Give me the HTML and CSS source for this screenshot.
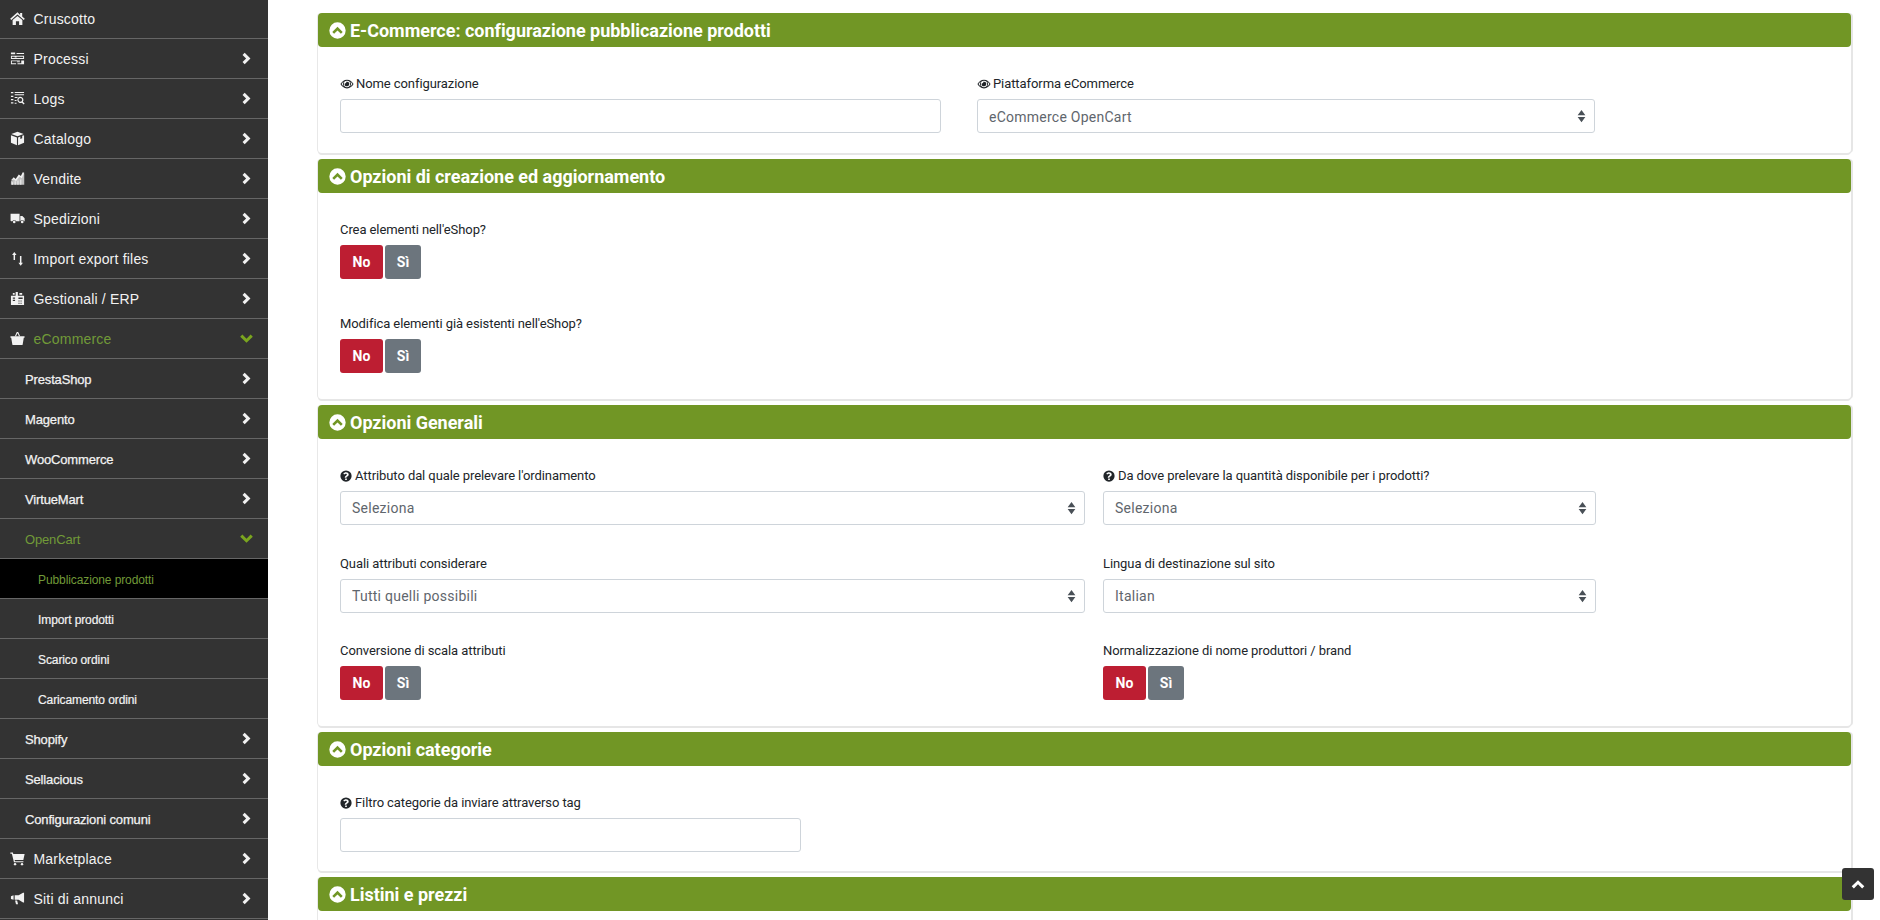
FILE: index.html
```html
<!DOCTYPE html>
<html lang="it">
<head>
    <meta charset="UTF-8">
    <title>E-Commerce: configurazione pubblicazione prodotti</title>
    <link rel="stylesheet" href="styles.css">
</head>
<body>
    <svg class="sprites" xmlns="http://www.w3.org/2000/svg">
        <symbol id="i-home" viewBox="0 0 16 16"><path d="M8 1.400.2 8.200l1.100 1.300L8 3.700l6.700 5.800 1.100-1.300-2.800-2.400V2h-2.200v2.300zM2.800 9.700 8 5.200l5.200 4.500v5.100H9.700v-4H6.300v4H2.800z"/></symbol>
        <symbol id="i-process" viewBox="0 0 16 16"><path d="M1 1.500h4.500v2H1zM7 2.200h8v.9H7zM1 5h14v3.500H1zm1 1v1.500h3V7h2v.5h7V6H7v.5H5V6zM1 10h9.500v.9H2v2.200h4.500v.9H1zm6.500 1.200h3v.9h-3zM8 13h7v1H8zm4-3h3v3h-3z"/></symbol>
        <symbol id="i-logs" viewBox="0 0 16 16"><path d="M5 1h10v1.200H5zM5 3.400h10v1H5zM1 1h2.600v1.400H1zM1 5h2.600v1.400H1zM1 8.400h2.600v1.400H1zM1 12h2.600v1.400H1zM5 6.400h3v1H5zM5 9.600h2v1H5zM5 12.600h2v1H5z"/><path d="M11 6a3.400 3.400 0 0 1 2.700 5.400l1.900 2-1 1-2-1.900A3.400 3.400 0 1 1 11 6zm0 1.400a2 2 0 1 0 0 4 2 2 0 0 0 0-4z"/></symbol>
        <symbol id="i-box" viewBox="0 0 16 16"><path d="M8 .8 14.600 3.200 8 5.700 1.400 3.200zM1 4.400l6.400 2.400v8.400L1 12.600zM15 4.400v8.200l-6.400 2.600V6.800l2.400-.9v2.600l2-.8V5.100z"/></symbol>
        <symbol id="i-chart" viewBox="0 0 16 16"><path d="M1 14.600v-3.400l3-3 2 1.800 3.600-4.600L12 7l2.200-4.400 1 .1v11.900z" opacity=".75"/><path d="M.8 10 4 6.600l2 1.800 3.400-4.600 2.200 1.600 2-4.200 1.600.6-2.600 6-2.600-1.800-3.600 4.800L4 9zM2 12h1v2.600H2zM5 11h1v3.600H5zM8 10h1v4.600H8zM11 9h1v5.600h-1z"/></symbol>
        <symbol id="i-truck" viewBox="0 0 16 16"><path d="M.6 3h9.600v8H6.400a2 2 0 0 0-3.800 0H1.400a.8.800 0 0 1-.8-.8zM11 5.200h2.200l2.400 2.600V11h-.7a2 2 0 0 0-3.800 0H11z"/><circle cx="4.500" cy="11.600" r="1.400"/><circle cx="13" cy="11.600" r="1.400"/></symbol>
        <symbol id="i-arrows" viewBox="0 0 16 16"><path d="M4.600 1 7 4.200H5.400v5.400H3.800V4.200H2.200zM10.600 5.400h1.600v7.200h1.600l-2.400 3.200-2.400-3.200h1.600z"/></symbol>
        <symbol id="i-erp" viewBox="0 0 16 16"><path d="M1 5h5V1h2.400v4H15v10H1zm2-3h2v2H3zm7 0h3v2h-3z"/><path fill="#333" d="M9 7h4.500v1.600H9zM9 10h1.200v1.200H9zm2.200 0h1.200v1.200h-1.200zM9 12.400h1.200v1.200H9zm2.200 0h1.200v1.200h-1.200zM3 7h2.400v1.200H3zm0 2.400h2.400v1.200H3z"/></symbol>
        <symbol id="i-basket" viewBox="0 0 16 16"><path d="M5.200 5.600 7 1.600c.2-.6 1.800-.6 2 0l1.800 4H9.500L8.300 2.600h-.6L6.500 5.600z"/><path d="M.5 5.600h15v1.600h-.8l-1.200 7.200c0 .3-.4.6-.7.6H3.200c-.3 0-.7-.3-.7-.6L1.300 7.200H.5z"/></symbol>
        <symbol id="i-cart" viewBox="0 0 16 16"><path d="M.4 1.600h2.700l.4 1.600h12.100l-1.400 6.400H5l.3 1.200h9v1.200H4.200L2 2.800H.4z"/><circle cx="5.400" cy="14" r="1.300"/><circle cx="12.800" cy="14" r="1.300"/></symbol>
        <symbol id="i-bullhorn" viewBox="0 0 16 16"><path d="M15 1.800v10.400h-1.100L9.200 9.400H5V4.600h4.200l4.700-2.800zM1 5.600l2.800-1v4.800L1 8.400zM5.400 10.200h2.200l1 3.800H6.400z"/></symbol>
        <symbol id="i-eye" viewBox="0 0 16 16"><path fill-rule="evenodd" d="M8 3c3.400 0 6 2.400 7.500 5C14 10.600 11.400 13 8 13S2 10.600.5 8C2 5.400 4.600 3 8 3zM8 4.400A3.600 3.600 0 1 0 8 11.600 3.600 3.600 0 0 0 8 4.400zM4.200 5.200C3.200 6 2.400 7 1.800 8c.6 1 1.400 2 2.400 2.800A5 5 0 0 1 4.200 5.200zM11.800 5.200a5 5 0 0 1 0 5.600c1-.8 1.800-1.800 2.400-2.800-.6-1-1.400-2-2.400-2.800zM8 5.400a2.600 2.600 0 1 1-2.400 1.600A1.200 1.200 0 0 0 7.200 5.500 2.600 2.600 0 0 1 8 5.400z"/></symbol>
        <symbol id="i-question" viewBox="0 0 16 16"><path fill-rule="evenodd" d="M8 .5a7.500 7.500 0 1 1 0 15 7.500 7.500 0 0 1 0-15zM6.900 11.200v2.100h2.200v-2.100zM8.100 2.900c-1.700 0-3 .8-3.800 2l1.500 1.200c.5-.6 1-1.100 2-1.100.8 0 1.400.4 1.400 1 0 .7-.5 1-1.200 1.500-.9.500-1.600 1.100-1.600 2.300v.6h2.200c0-1 .4-1.200 1.100-1.600 1-.6 1.900-1.300 1.900-2.800 0-2-1.800-3.100-3.500-3.100z"/></symbol>
        <symbol id="i-circle-up" viewBox="0 0 16 16"><path fill-rule="evenodd" d="M8 .3a7.700 7.700 0 1 1 0 15.400A7.700 7.700 0 0 1 8 .3zm0 4.200L3.100 9.400l1.700 1.700L8 7.900l3.200 3.200 1.700-1.700z"/></symbol>
        <symbol id="i-right" viewBox="0 0 10 14"><path d="M3 .6 9.400 7 3 13.400.6 11l4-4-4-4z"/></symbol>
        <symbol id="i-down" viewBox="0 0 14 10"><path d="M2.400.6 7 5.200 11.600.6 14 3 7 9.800 0 3z"/></symbol>
        <symbol id="i-up" viewBox="0 0 14 10"><path d="M7 .2 14 7l-2.400 2.400L7 4.800 2.400 9.400 0 7z"/></symbol>
        <symbol id="i-updown" viewBox="0 0 10 16"><path d="M5 1 9.400 7H.6zM.6 9h8.800L5 15z"/></symbol>
    </svg>

    <div class="layout">
        <nav class="sidebar">
            <a class="nav-item"><svg class="nav-icon"><use href="#i-home"/></svg><span class="nav-text">Cruscotto</span></a>
            <a class="nav-item"><svg class="nav-icon"><use href="#i-process"/></svg><span class="nav-text">Processi</span><svg class="nav-arrow"><use href="#i-right"/></svg></a>
            <a class="nav-item"><svg class="nav-icon"><use href="#i-logs"/></svg><span class="nav-text">Logs</span><svg class="nav-arrow"><use href="#i-right"/></svg></a>
            <a class="nav-item"><svg class="nav-icon"><use href="#i-box"/></svg><span class="nav-text">Catalogo</span><svg class="nav-arrow"><use href="#i-right"/></svg></a>
            <a class="nav-item"><svg class="nav-icon"><use href="#i-chart"/></svg><span class="nav-text">Vendite</span><svg class="nav-arrow"><use href="#i-right"/></svg></a>
            <a class="nav-item"><svg class="nav-icon"><use href="#i-truck"/></svg><span class="nav-text">Spedizioni</span><svg class="nav-arrow"><use href="#i-right"/></svg></a>
            <a class="nav-item"><svg class="nav-icon"><use href="#i-arrows"/></svg><span class="nav-text">Import export files</span><svg class="nav-arrow"><use href="#i-right"/></svg></a>
            <a class="nav-item"><svg class="nav-icon"><use href="#i-erp"/></svg><span class="nav-text">Gestionali / ERP</span><svg class="nav-arrow"><use href="#i-right"/></svg></a>
            <a class="nav-item open"><svg class="nav-icon"><use href="#i-basket"/></svg><span class="nav-text">eCommerce</span><svg class="nav-arrow-down"><use href="#i-down"/></svg></a>
            <a class="nav-item sub"><span class="nav-text">PrestaShop</span><svg class="nav-arrow"><use href="#i-right"/></svg></a>
            <a class="nav-item sub"><span class="nav-text">Magento</span><svg class="nav-arrow"><use href="#i-right"/></svg></a>
            <a class="nav-item sub"><span class="nav-text">WooCommerce</span><svg class="nav-arrow"><use href="#i-right"/></svg></a>
            <a class="nav-item sub"><span class="nav-text">VirtueMart</span><svg class="nav-arrow"><use href="#i-right"/></svg></a>
            <a class="nav-item sub open"><span class="nav-text">OpenCart</span><svg class="nav-arrow-down"><use href="#i-down"/></svg></a>
            <a class="nav-item leaf active"><span class="nav-text">Pubblicazione prodotti</span></a>
            <a class="nav-item leaf"><span class="nav-text">Import prodotti</span></a>
            <a class="nav-item leaf"><span class="nav-text">Scarico ordini</span></a>
            <a class="nav-item leaf"><span class="nav-text">Caricamento ordini</span></a>
            <a class="nav-item sub"><span class="nav-text">Shopify</span><svg class="nav-arrow"><use href="#i-right"/></svg></a>
            <a class="nav-item sub"><span class="nav-text">Sellacious</span><svg class="nav-arrow"><use href="#i-right"/></svg></a>
            <a class="nav-item sub"><span class="nav-text">Configurazioni comuni</span><svg class="nav-arrow"><use href="#i-right"/></svg></a>
            <a class="nav-item"><svg class="nav-icon"><use href="#i-cart"/></svg><span class="nav-text">Marketplace</span><svg class="nav-arrow"><use href="#i-right"/></svg></a>
            <a class="nav-item"><svg class="nav-icon"><use href="#i-bullhorn"/></svg><span class="nav-text">Siti di annunci</span><svg class="nav-arrow"><use href="#i-right"/></svg></a>
        </nav>

        <main class="content">
            <section class="card">
                <h2 class="card-title"><svg class="title-icon"><use href="#i-circle-up"/></svg>E-Commerce: configurazione pubblicazione prodotti</h2>
                <div class="card-body row-config">
                    <div class="field">
                        <label class="field-label"><svg class="label-icon eye"><use href="#i-eye"/></svg>Nome configurazione</label>
                        <input class="control" type="text">
                    </div>
                    <div class="field">
                        <label class="field-label"><svg class="label-icon eye"><use href="#i-eye"/></svg>Piattaforma eCommerce</label>
                        <div class="select-wrap">
                            <select class="control"><option>eCommerce OpenCart</option></select>
                            <svg class="select-arrows"><use href="#i-updown"/></svg>
                        </div>
                    </div>
                </div>
            </section>

            <section class="card">
                <h2 class="card-title"><svg class="title-icon"><use href="#i-circle-up"/></svg>Opzioni di creazione ed aggiornamento</h2>
                <div class="card-body stack has-toggle">
                    <div class="field">
                        <label class="field-label">Crea elementi nell'eShop?</label>
                        <div class="toggle"><button class="btn btn-no">No</button><button class="btn btn-si">Sì</button></div>
                    </div>
                    <div class="field">
                        <label class="field-label">Modifica elementi già esistenti nell'eShop?</label>
                        <div class="toggle"><button class="btn btn-no">No</button><button class="btn btn-si">Sì</button></div>
                    </div>
                </div>
            </section>

            <section class="card">
                <h2 class="card-title"><svg class="title-icon"><use href="#i-circle-up"/></svg>Opzioni Generali</h2>
                <div class="card-body row-general has-toggle">
                    <div class="field">
                        <label class="field-label"><svg class="label-icon"><use href="#i-question"/></svg>Attributo dal quale prelevare l'ordinamento</label>
                        <div class="select-wrap">
                            <select class="control"><option>Seleziona</option></select>
                            <svg class="select-arrows"><use href="#i-updown"/></svg>
                        </div>
                    </div>
                    <div class="field">
                        <label class="field-label"><svg class="label-icon"><use href="#i-question"/></svg>Da dove prelevare la quantità disponibile per i prodotti?</label>
                        <div class="select-wrap">
                            <select class="control"><option>Seleziona</option></select>
                            <svg class="select-arrows"><use href="#i-updown"/></svg>
                        </div>
                    </div>
                    <div class="field">
                        <label class="field-label">Quali attributi considerare</label>
                        <div class="select-wrap">
                            <select class="control"><option>Tutti quelli possibili</option></select>
                            <svg class="select-arrows"><use href="#i-updown"/></svg>
                        </div>
                    </div>
                    <div class="field">
                        <label class="field-label">Lingua di destinazione sul sito</label>
                        <div class="select-wrap">
                            <select class="control"><option>Italian</option></select>
                            <svg class="select-arrows"><use href="#i-updown"/></svg>
                        </div>
                    </div>
                    <div class="field">
                        <label class="field-label">Conversione di scala attributi</label>
                        <div class="toggle"><button class="btn btn-no">No</button><button class="btn btn-si">Sì</button></div>
                    </div>
                    <div class="field">
                        <label class="field-label">Normalizzazione di nome produttori / brand</label>
                        <div class="toggle"><button class="btn btn-no">No</button><button class="btn btn-si">Sì</button></div>
                    </div>
                </div>
            </section>

            <section class="card">
                <h2 class="card-title"><svg class="title-icon"><use href="#i-circle-up"/></svg>Opzioni categorie</h2>
                <div class="card-body row-categories">
                    <div class="field">
                        <label class="field-label"><svg class="label-icon"><use href="#i-question"/></svg>Filtro categorie da inviare attraverso tag</label>
                        <input class="control" type="text">
                    </div>
                </div>
            </section>

            <section class="card">
                <h2 class="card-title"><svg class="title-icon"><use href="#i-circle-up"/></svg>Listini e prezzi</h2>
                <div class="card-body"></div>
            </section>
        </main>
    </div>

    <a class="scroll-top"><svg><use href="#i-up"/></svg></a>
</body>
</html>
```

FILE: styles.css
```css
* {
    margin: 0;
    padding: 0;
    box-sizing: border-box;
}

html, body {
    height: 100%;
    overflow: hidden;
}

body {
    font-family: Roboto, 'Liberation Sans', Arial, sans-serif;
    font-size: 13px;
    background: #fff;
    color: #212529;
}

.sprites {
    display: none;
}

.layout {
    display: flex;
    align-items: flex-start;
    height: 100%;
}

/* Sidebar */
.sidebar {
    flex: 0 0 268px;
    height: 921px;
    margin-top: -1px;
    background: #333;
    font-family: 'Liberation Sans', Arial, sans-serif;
    font-size: 14px;
    letter-spacing: .2px;
    color: #f2f2f2;
    overflow: hidden;
}

.nav-item {
    display: flex;
    align-items: center;
    height: 40px;
    padding-left: 10px;
    padding-right: 17px;
    border-bottom: 1px solid #666;
}

.nav-icon {
    flex: 0 0 15px;
    width: 15px;
    height: 15px;
    margin-right: 8.5px;
    fill: #f2f2f2;
}

.nav-text {
    flex: 1;
}

.nav-arrow {
    width: 9px;
    height: 13px;
    fill: #f2f2f2;
}

.nav-arrow-down {
    width: 13px;
    height: 9px;
    margin-right: -2px;
    fill: #7aa51f;
}

.nav-item.open .nav-text {
    color: #719a38;
}

.nav-item.sub {
    padding-left: 25px;
    font-size: 13px;
    letter-spacing: -.15px;
    -webkit-text-stroke: .25px #f2f2f2;
}

.nav-item.sub .nav-text,
.nav-item.leaf .nav-text {
    padding-top: 2px;
}

.nav-item.sub.open {
    -webkit-text-stroke: 0;
}

.nav-item.leaf {
    padding-left: 38px;
    font-size: 12px;
    letter-spacing: -.1px;
    -webkit-text-stroke: .2px #f2f2f2;
}

.nav-item.active {
    background: #000;
    -webkit-text-stroke: 0;
}

.nav-item.active .nav-text {
    color: #719a38;
}

/* Main column */
.content {
    flex: 1;
    min-width: 0;
    padding: 13px 29px 0 50px;
}

.card {
    margin-bottom: 6px;
    border-radius: 4px;
    background: #fff;
    box-shadow: -1px 0 0 #e8e8e8, 2px 0 0 #e6e6e6, 0 2px 0 #e6e6e6;
}

.card-title {
    display: flex;
    align-items: center;
    height: 34px;
    padding-left: 11px;
    border-radius: 4px;
    background: #719625;
    color: #fff;
    font-size: 18px;
    font-weight: 700;
    letter-spacing: -.02px;
}

.title-icon {
    width: 17px;
    height: 17px;
    margin-right: 4px;
    fill: #fff;
}

.card-body {
    padding: 27px 22px 20px;
}

.has-toggle {
    padding-bottom: 26px;
}

.stack {
    display: grid;
    row-gap: 35px;
}

.row-config {
    display: grid;
    grid-template-columns: 601px 618px;
    column-gap: 36px;
}

.row-general {
    display: grid;
    grid-template-columns: 745px 493px;
    column-gap: 18px;
    row-gap: 28.5px;
}

.row-categories {
    display: grid;
    grid-template-columns: 461px;
    padding-bottom: 19px;
}

/* Form fields */
.field-label {
    display: flex;
    align-items: center;
    height: 18px;
    margin-bottom: 7px;
    padding-top: 2px;
    font-size: 13px;
    letter-spacing: -.08px;
    line-height: 16px;
}

.label-icon {
    width: 12px;
    height: 12px;
    margin-right: 3px;
    fill: #212529;
}

.label-icon.eye {
    width: 14px;
    height: 14px;
    margin-right: 2px;
}

.control {
    display: block;
    width: 100%;
    height: 34px;
    padding: 0 11px;
    border: 1px solid #ced4da;
    border-radius: 3px;
    background: #fff;
    color: #5f666d;
    font-family: Roboto, sans-serif;
    font-size: 14px;
    letter-spacing: .25px;
    appearance: none;
}

.row-config select {
    padding-top: 2px;
}

.select-wrap {
    position: relative;
}

.select-arrows {
    position: absolute;
    top: 10px;
    right: 9px;
    width: 9px;
    height: 14px;
    fill: #495057;
}

.toggle {
    display: flex;
    gap: 2px;
}

.btn {
    height: 34px;
    border: 0;
    border-radius: 3px;
    color: #fff;
    font-family: Roboto, sans-serif;
    font-size: 14px;
    font-weight: 700;
}

.btn-no {
    width: 43px;
    background: #bd1e32;
}

.btn-si {
    width: 36px;
    background: #6c757d;
}

.scroll-top {
    position: fixed;
    right: 6px;
    bottom: 20px;
    display: flex;
    align-items: center;
    justify-content: center;
    width: 32px;
    height: 32px;
    border-radius: 3px;
    background: #333;
}

.scroll-top svg {
    width: 14px;
    height: 9px;
    fill: #fff;
}
```
